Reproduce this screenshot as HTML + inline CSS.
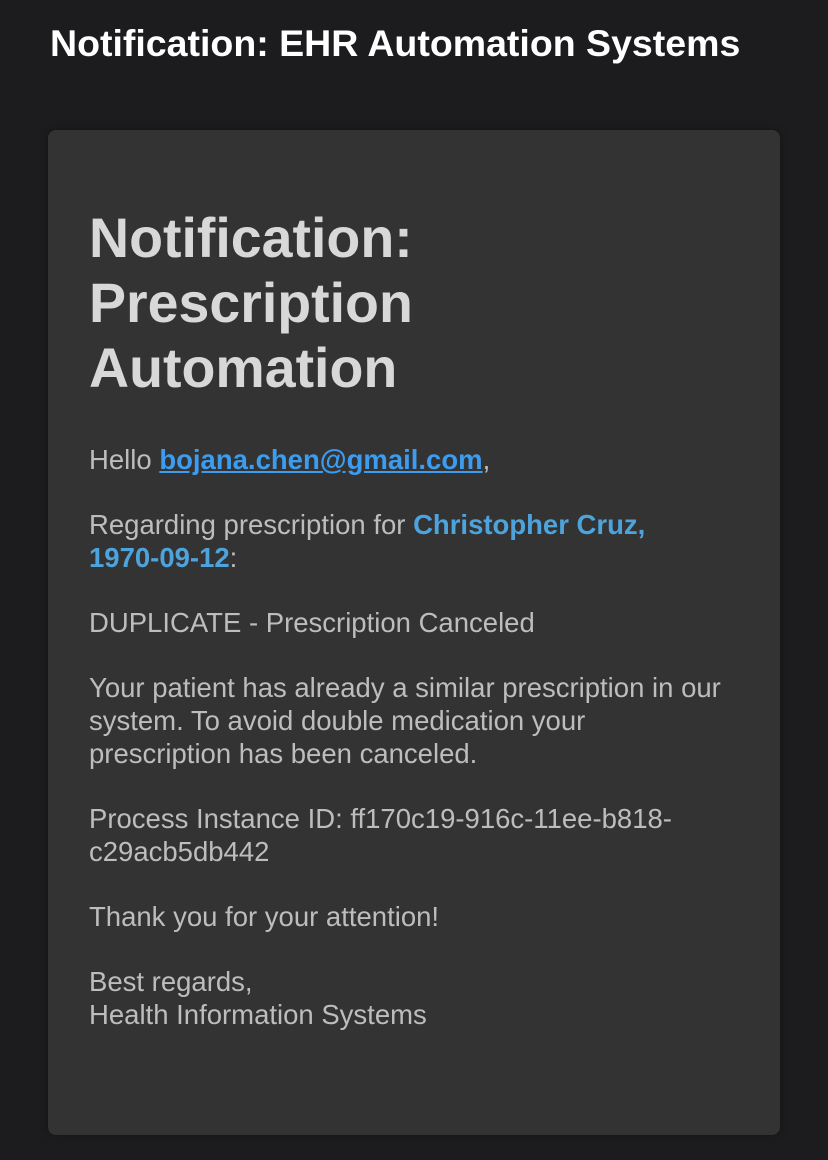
<!DOCTYPE html>
<html><head><meta charset="utf-8"><style>
html,body{margin:0;padding:0;background:#1c1c1e;width:828px;height:1160px;overflow:hidden;font-family:"Liberation Sans",Arial,sans-serif}
.hdr{position:absolute;left:50px;top:20px;color:#fff;font-weight:bold;font-size:37.5px;line-height:46px;white-space:nowrap}
.card{position:absolute;left:48px;top:130px;width:732px;height:1005px;background:#333333;border-radius:8px;box-shadow:0 0 8px rgba(0,0,0,.3)}
h1{position:absolute;left:41px;top:76px;margin:0;width:420px;font-size:55.5px;line-height:65px;color:#d8d8d8;font-weight:bold}
.body{position:absolute;left:41px;top:313px;width:680px;color:#bdbdbd;font-size:27.5px;line-height:33px;white-space:nowrap}
p{margin:0 0 32px 0}
a{color:#3b9cf0;font-weight:bold;text-decoration:underline}
b{color:#4da3dc}
</style></head><body>
<div class="hdr">Notification: EHR Automation Systems</div>
<div class="card">
<h1>Notification:<br>Prescription<br>Automation</h1>
<div class="body">
<p>Hello <a>bojana.chen@gmail.com</a>,</p>
<p>Regarding prescription for <b>Christopher Cruz,<br>1970-09-12</b>:</p>
<p>DUPLICATE - Prescription Canceled</p>
<p>Your patient has already a similar prescription in our<br>system. To avoid double medication your<br>prescription has been canceled.</p>
<p>Process Instance ID: ff170c19-916c-11ee-b818-<br>c29acb5db442</p>
<p>Thank you for your attention!</p>
<p>Best regards,<br>Health Information Systems</p>
</div>
</div>
</body></html>
